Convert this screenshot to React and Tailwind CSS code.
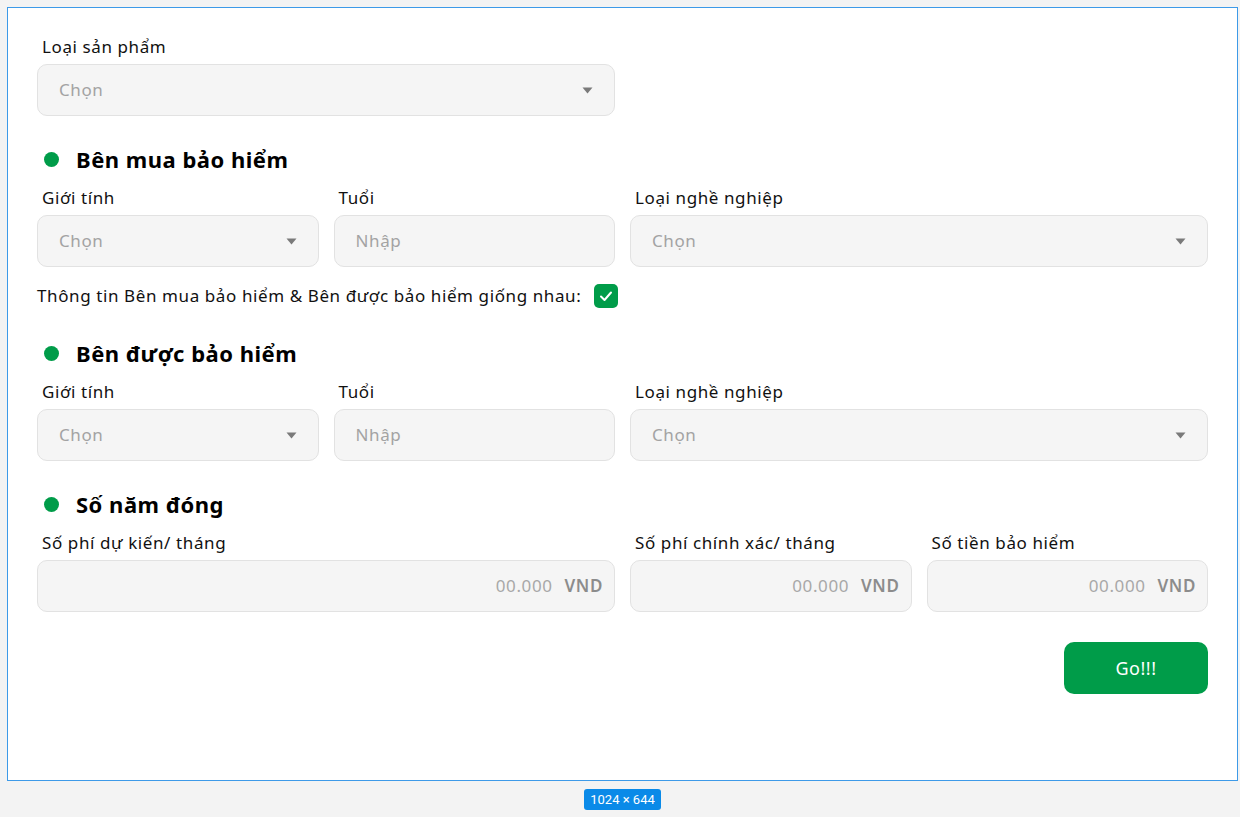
import React from "react";

const font = { fontFamily: '"Noto Sans", "Liberation Sans", sans-serif' };

function Caret() {
  return (
    <svg width="11" height="7" viewBox="0 0 11 7" className="shrink-0">
      <path d="M0.5 0.5 L10.5 0.5 L5.5 6.5 Z" fill="#7a7a7a" />
    </svg>
  );
}

function Field({ label, span = "", children }) {
  return (
    <div className={span}>
      <div className="h-6 pl-[5px] text-[17px] leading-6 tracking-[0.6px] text-[#111]">{label}</div>
      <div className="mt-[5px]">{children}</div>
    </div>
  );
}

function Select() {
  return (
    <div className="flex h-[52px] items-center justify-between rounded-[10px] border border-[#e2e2e2] bg-[#f5f5f5] pl-[21px] pr-[21px]">
      <span className="text-[17px] tracking-[0.6px] text-[#a3a3a3]">Chọn</span>
      <Caret />
    </div>
  );
}

function TextInput({ placeholder }) {
  return (
    <div className="flex h-[52px] items-center rounded-[10px] border border-[#e2e2e2] bg-[#f5f5f5] pl-[21px]">
      <span className="text-[17px] tracking-[0.6px] text-[#a3a3a3]">{placeholder}</span>
    </div>
  );
}

function Money() {
  return (
    <div className="flex h-[52px] items-center justify-end gap-3 rounded-[10px] border border-[#e2e2e2] bg-[#f5f5f5] pr-[11px]">
      <span className="text-[17px] tracking-[0.6px] text-[#a8a8a8]">00.000</span>
      <span className="text-[17px] font-semibold tracking-[0.6px] text-[#8c8c8c]">VND</span>
    </div>
  );
}

function Heading({ children, className = "" }) {
  return (
    <div className={`flex h-[30px] items-center gap-[17px] pl-[7px] ${className}`}>
      <span className="h-[15px] w-[15px] rounded-full bg-[#009c49]" />
      <span className="text-[22px] font-bold leading-[30px] tracking-[0.5px] text-black">{children}</span>
    </div>
  );
}

function PartyRow() {
  return (
    <div className="mt-3 grid grid-cols-4 gap-x-[15px]">
      <Field label="Giới tính">
        <Select />
      </Field>
      <Field label="Tuổi">
        <TextInput placeholder="Nhập" />
      </Field>
      <Field label="Loại nghề nghiệp" span="col-span-2">
        <Select />
      </Field>
    </div>
  );
}

export default function App() {
  return (
    <div className="h-[817px] w-full bg-[#f3f3f3] pl-[7px] pt-[7px]" style={font}>
      <div className="h-[774px] w-[1231px] border border-[#3d9ae8] bg-white px-[29px] pt-[27px]">
        <div className="grid grid-cols-4 gap-x-[15px]">
          <Field label="Loại sản phẩm" span="col-span-2">
            <Select />
          </Field>
        </div>

        <Heading className="mt-[28px]">Bên mua bảo hiểm</Heading>
        <PartyRow />

        <div className="mt-[17px] flex h-6 items-center gap-[13px]">
          <span className="text-[17px] tracking-[0.6px] text-[#111]">
            Thông tin Bên mua bảo hiểm &amp; Bên được bảo hiểm giống nhau:
          </span>
          <span className="flex h-6 w-6 items-center justify-center rounded-[5px] bg-[#009c49]">
            <svg width="16" height="16" viewBox="0 0 16 16">
              <path d="M3 8.5 L6.5 12 L13 4.5" fill="none" stroke="#fff" strokeWidth="2" strokeLinecap="round" strokeLinejoin="round" />
            </svg>
          </span>
        </div>

        <Heading className="mt-[30px]">Bên được bảo hiểm</Heading>
        <PartyRow />

        <Heading className="mt-[28px]">Số năm đóng</Heading>
        <div className="mt-3 grid grid-cols-4 gap-x-[15px]">
          <Field label="Số phí dự kiến/ tháng" span="col-span-2">
            <Money />
          </Field>
          <Field label="Số phí chính xác/ tháng">
            <Money />
          </Field>
          <Field label="Số tiền bảo hiểm">
            <Money />
          </Field>
        </div>

        <div className="mt-[30px] flex justify-end">
          <button className="h-[52px] w-[144px] rounded-[10px] bg-[#009c49] text-[18px] tracking-[0.5px] text-white">
            Go!!!
          </button>
        </div>
      </div>
      <div className="mt-2 flex w-[1231px] justify-center">
        <span className="rounded-[3px] bg-[#0a8ae8] px-[6px] py-[2px] text-[13px] leading-[17px] text-white" style={{ fontFamily: '"Roboto", sans-serif' }}>
          1024 × 644
        </span>
      </div>
    </div>
  );
}
